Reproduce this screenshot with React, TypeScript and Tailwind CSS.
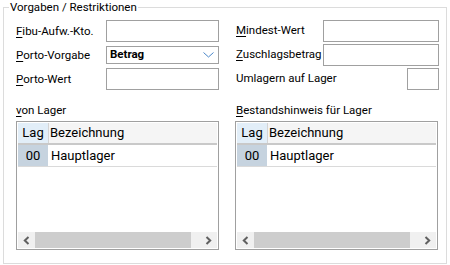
import { ReactNode } from "react";

const Key = ({ children }: { children: ReactNode }) => (
    <span className="underline decoration-1 underline-offset-[2px]">{children}</span>
);

const TextBox = ({ className = "" }: { className?: string }) => (
    <div className={`h-[22px] border border-[#a0a0a0] bg-white ${className}`} />
);

const Chevron = ({ dir }: { dir: "left" | "right" }) => (
    <svg width="7" height="9" viewBox="0 0 7 9">
        <polyline
            points={dir === "left" ? "5.5,1 1.8,4.5 5.5,8" : "1.5,1 5.2,4.5 1.5,8"}
            fill="none"
            stroke="#606060"
            strokeWidth="2"
        />
    </svg>
);

const LagerTable = () => (
    <div className="mt-[4px] flex h-[129px] w-[203px] flex-col border border-[#a0a0a0] bg-white p-[1px] text-[13px]">
        <div className="flex h-[20px] leading-[20px]">
            <div className="w-[30px] bg-[#e2eef8] text-center">Lag</div>
            <div className="w-px bg-[#d4d4d4]" />
            <div className="flex-1 bg-[#f5f5f5] pl-[1px]">Bezeichnung</div>
        </div>
        <div className="h-[2px] bg-[#c9c9c9]" />
        <div className="flex h-[21px] leading-[21px]">
            <div className="w-[30px] bg-[#c6d3df] text-center">00</div>
            <div className="flex-1 pl-[3px]">Hauptlager</div>
        </div>
        <div className="h-px bg-[#dadada]" />
        <div className="flex-1" />
        <div className="flex h-[16px] bg-[#f0f0f0]">
            <div className="flex w-[17px] items-center justify-center">
                <Chevron dir="left" />
            </div>
            <div className="w-[156px] bg-[#cdcdcd]" />
            <div className="flex-1" />
            <div className="flex w-[17px] items-center justify-center">
                <Chevron dir="right" />
            </div>
        </div>
    </div>
);

export default function App() {
    return (
        <div className="h-[265px] w-[450px] bg-white font-['Roboto',sans-serif] text-[11.5px] text-black">
            <fieldset className="ml-[3px] h-[264px] w-[444px] border border-[#dcdcdc] p-0">
                <legend className="ml-[5px] px-[1px] leading-[14px]">Vorgaben / Restriktionen</legend>

                <div className="pl-[12px] pr-[7px] pt-[6px]">
                    <div className="grid grid-cols-[203px_204px] gap-x-[16px]">
                        <div className="flex flex-col gap-[2px]">
                            <div className="flex h-[22px] items-center">
                                <span className="w-[90px] pt-[2px]"><Key>F</Key>ibu-Aufw.-Kto.</span>
                                <TextBox className="w-[113px]" />
                            </div>
                            <div className="flex h-[22px] items-center">
                                <span className="w-[90px] pt-[2px]"><Key>P</Key>orto-Vorgabe</span>
                                <div className="flex h-[18px] w-[113px] items-center justify-between border border-[#a0a0a0] bg-white pl-[3px] pr-[4px]">
                                    <span className="font-bold">Betrag</span>
                                    <svg width="11" height="6" viewBox="0 0 11 6">
                                        <polyline points="0.5,0.5 5.5,5 10.5,0.5" fill="none" stroke="#4a86c8" strokeWidth="1" />
                                    </svg>
                                </div>
                            </div>
                            <div className="flex h-[22px] items-center">
                                <span className="w-[90px] pt-[1px]"><Key>P</Key>orto-Wert</span>
                                <TextBox className="w-[113px]" />
                            </div>
                        </div>

                        <div className="flex flex-col gap-[2px]">
                            <div className="flex h-[22px] items-center">
                                <span className="w-[88px] pl-[1px]"><Key>M</Key>indest-Wert</span>
                                <TextBox className="w-[116px]" />
                            </div>
                            <div className="flex h-[22px] items-center">
                                <span className="w-[88px] pl-[1px]"><Key>Z</Key>uschlagsbetrag</span>
                                <TextBox className="w-[116px]" />
                            </div>
                            <div className="flex h-[22px] items-center justify-between">
                                <span className="pl-[1px]">Umlagern auf Lager</span>
                                <TextBox className="w-[32px]" />
                            </div>
                        </div>
                    </div>

                    <div className="mt-[13px] grid grid-cols-[203px_204px] gap-x-[16px]">
                        <div>
                            <div className="h-[14px] leading-[14px]"><Key>v</Key>on Lager</div>
                            <LagerTable />
                        </div>
                        <div>
                            <div className="h-[14px] pl-[1px] leading-[14px]"><Key>B</Key>estandshinweis für Lager</div>
                            <LagerTable />
                        </div>
                    </div>
                </div>
            </fieldset>
        </div>
    );
}
